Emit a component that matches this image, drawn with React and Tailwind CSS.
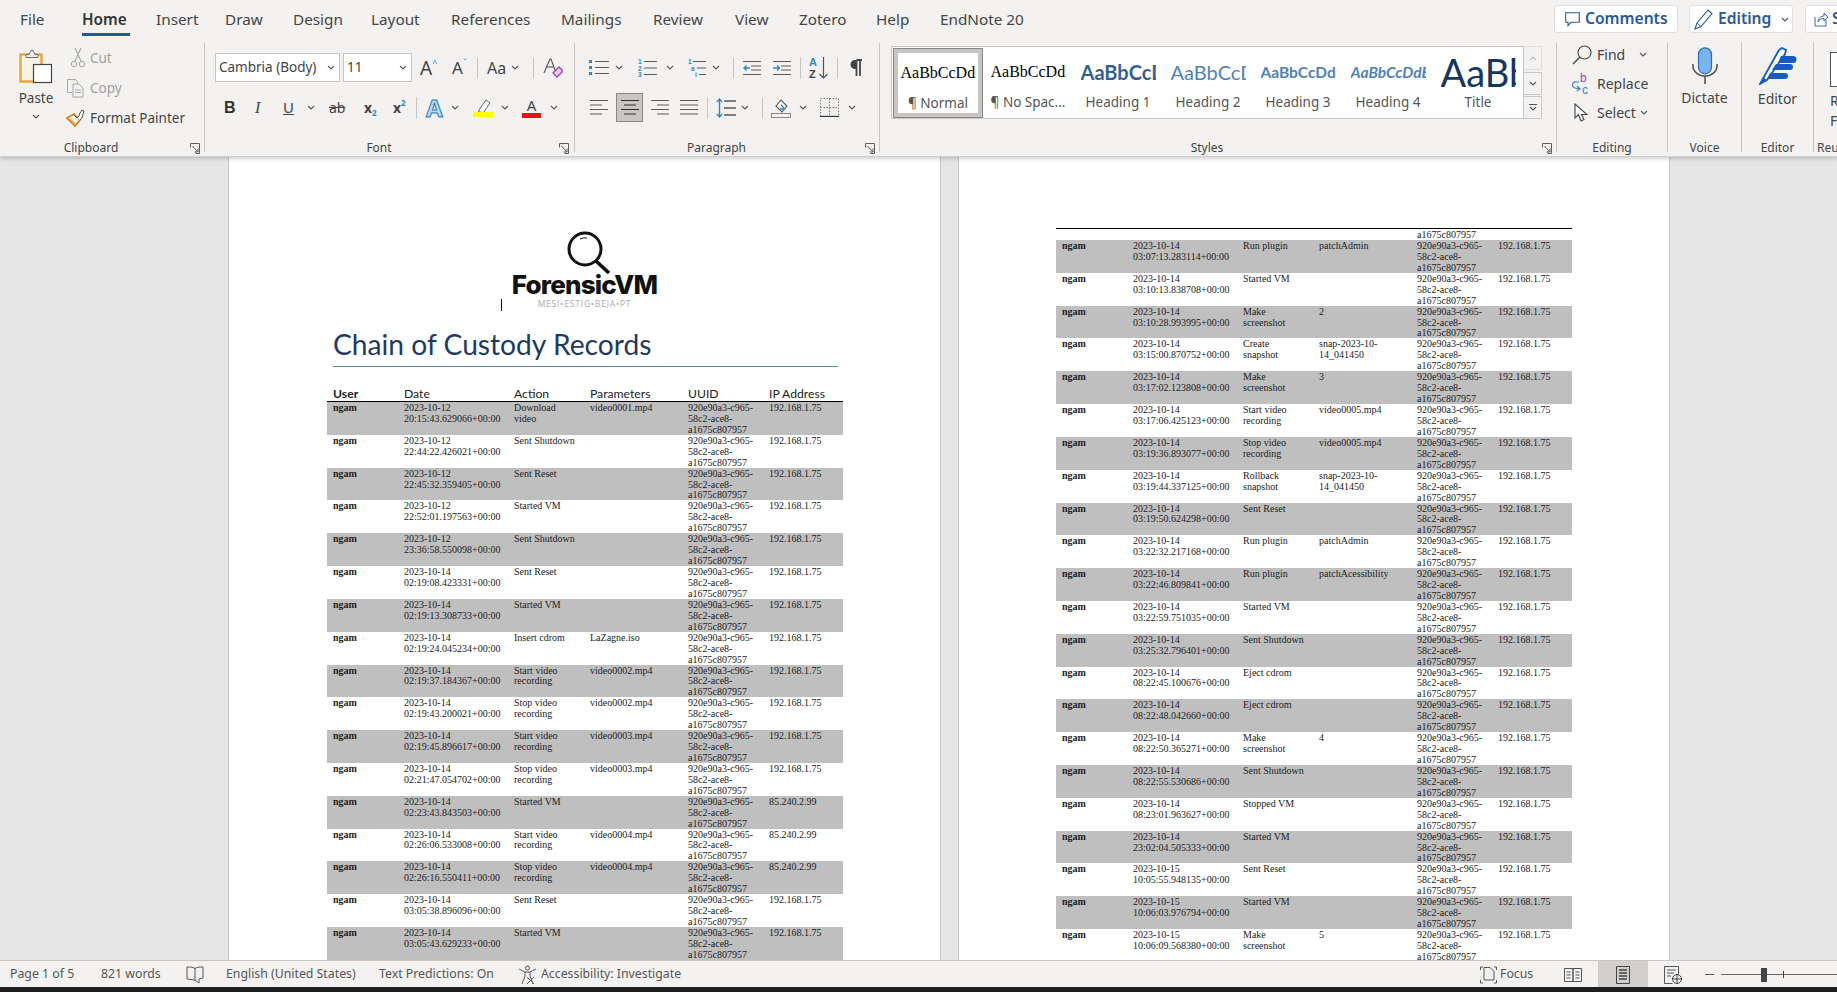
import React from "react";

const S = ({ w, h, children }) => (
  <svg width={w} height={h} viewBox={`0 0 ${w} ${h}`} fill="none" className="block shrink-0">{children}</svg>
);
const Chev = ({ c = "#555" }) => (
  <S w={8} h={5}><path d="M1 1l3 3 3-3" stroke={c} strokeWidth="1.1" /></S>
);
const Launcher = () => (
  <S w={10} h={11}><path d="M.5 .5h9v10M.5 .5v4M9.5 10.5h-4M2.5 3l5.5 6M8 5.5V9H4.5" stroke="#605e5c" strokeWidth="1" /></S>
);
const Sep = ({ h = "h-[22px]" }) => <div className={`w-px bg-[#c8c6c4] shrink-0 ${h}`} />;
const L = ({ d, w = 18, h = 16, c = "#5c5a58" }) => (
  <S w={w} h={h}><path d={d} stroke={c} strokeWidth="1.2" /></S>
);

const PasteIcon = () => (
  <S w={34} h={36}>
    <rect x="1.5" y="6.5" width="21" height="27" fill="#fbf3e6" stroke="#e8a33d" strokeWidth="2.4" />
    <path d="M7 6.5h3l2-4h2l2 4h3v3H7z" fill="#f3f2f1" stroke="#6b6b6b" strokeWidth="1" />
    <rect x="14.5" y="16.5" width="18" height="18" fill="#fff" stroke="#444" strokeWidth="1.2" />
  </S>
);
const CutIcon = () => (
  <S w={20} h={22}>
    <path d="M7 1l6 13M13 1L7 14" stroke="#a6a6a6" strokeWidth="1.1" />
    <circle cx="6" cy="17" r="2.7" stroke="#a6a6a6" /><circle cx="14" cy="17" r="2.7" stroke="#a6a6a6" />
  </S>
);
const CopyIcon = () => (
  <S w={20} h={20}>
    <path d="M1.5 1.5h8l2 2v2M1.5 1.5v13h5" stroke="#a6a6a6" />
    <path d="M7 6h6l4 4v9H7z" fill="#f3f2f1" stroke="#a6a6a6" />
    <path d="M9 12h6M9 14.5h6" stroke="#a6a6a6" />
  </S>
);
const PainterIcon = () => (
  <S w={20} h={18}>
    <path d="M1 9l7-4 6 6-5 6z" fill="#fdf3e4" stroke="#d47b1f" strokeWidth="1.6" />
    <path d="M8 6l3 3 2-2 1-3 2-3 2 1-1 3-1 4-2 2" fill="#fff" stroke="#555" strokeWidth="1" />
    <path d="M4 10l5 5" stroke="#e8a33d" strokeWidth="1.4" />
  </S>
);
const ClearIcon = () => (
  <S w={20} h={22}>
    <path d="M1 16L7 2h1l5 14" stroke="#555" strokeWidth="1.1" /><path d="M3.5 10h7" stroke="#555" strokeWidth="1.1" />
    <path d="M10 16l6-6 4 4-6 6z" fill="#e9c8ec" stroke="#a645ad" strokeWidth="1.3" />
  </S>
);
const Bullets = () => (
  <S w={20} h={18}>
    <rect x="0" y="1" width="3" height="3" fill="#2f88c7" /><rect x="0" y="7" width="3" height="3" fill="#2f88c7" /><rect x="0" y="13" width="3" height="3" fill="#2f88c7" />
    <path d="M6 2.5h14M6 8.5h14M6 14.5h14" stroke="#5c5a58" strokeWidth="1.2" />
  </S>
);
const Num = () => (
  <S w={19} h={20}>
    <text x="0" y="6" fontSize="6.5" fontWeight="700" fill="#2f88c7" fontFamily="Liberation Sans">1</text>
    <text x="0" y="12.5" fontSize="6.5" fontWeight="700" fill="#2f88c7" fontFamily="Liberation Sans">2</text>
    <text x="0" y="19" fontSize="6.5" fontWeight="700" fill="#2f88c7" fontFamily="Liberation Sans">3</text>
    <path d="M6 3.5h13M6 10h13M6 16.5h13" stroke="#5c5a58" strokeWidth="1.2" />
  </S>
);
const Multi = () => (
  <S w={18} h={20}>
    <text x="0" y="6" fontSize="6.5" fontWeight="700" fill="#2f88c7" fontFamily="Liberation Sans">1</text>
    <text x="3" y="12.5" fontSize="6.5" fontWeight="700" fill="#2f88c7" fontFamily="Liberation Sans">a</text>
    <text x="7" y="19" fontSize="6.5" fontWeight="700" fill="#2f88c7" fontFamily="Liberation Sans">i</text>
    <path d="M5 3.5h13M9 10h9M11 16.5h7" stroke="#5c5a58" strokeWidth="1.2" />
  </S>
);
const Indent = ({ inc }) => (
  <S w={18} h={16}>
    <path d="M0 1.5h18M8 6h10M8 10h10M0 14.5h18" stroke="#5c5a58" strokeWidth="1.2" />
    <path d={inc ? "M0 8h6M4 5.5L6.5 8 4 10.5" : "M7 8H1M3.5 5.5L1 8l2.5 2.5"} stroke="#2f88c7" strokeWidth="1.3" />
  </S>
);
const Sort = () => (
  <S w={20} h={24}>
    <text x="0" y="10" fontSize="11" fontWeight="700" fill="#2f88c7" fontFamily="Liberation Sans">A</text>
    <text x="0" y="22" fontSize="11" fontWeight="700" fill="#444" fontFamily="Liberation Sans">Z</text>
    <path d="M14.5 1v21M10.5 18l4 4 4-4" stroke="#555" strokeWidth="1.2" />
  </S>
);
const Pilcrow = () => (
  <S w={14} h={18}>
    <path d="M9 1H6a4.5 4.5 0 000 9h1.5V1z" fill="#444" />
    <path d="M7.5 1v16M11 1v16M7.5 1H13" stroke="#444" strokeWidth="1.8" />
  </S>
);
const Align = ({ t }) => {
  const d = {
    l: "M0 1.5h18M0 6h12M0 10.5h18M0 15h12",
    c: "M0 1.5h18M3 6h12M0 10.5h18M3 15h12",
    r: "M0 1.5h18M6 6h12M0 10.5h18M6 15h12",
    j: "M0 1.5h18M0 6h18M0 10.5h18M0 15h18",
  }[t];
  return <L d={d} h={17} c={t === "c" ? "#323130" : "#5c5a58"} />;
};
const LineSp = () => (
  <S w={20} h={20}>
    <path d="M8 3h12M8 10h12M8 17h12" stroke="#5c5a58" strokeWidth="1.3" />
    <path d="M3.5 1v18M1 4l2.5-3L6 4M1 16l2.5 3L6 16" stroke="#2f88c7" strokeWidth="1.4" />
  </S>
);
const Shade = () => (
  <S w={20} h={20}>
    <path d="M5 8l5-6 6 6-5 6z" stroke="#555" strokeWidth="1.1" />
    <path d="M9 11l4 0M10 7l3 3" stroke="#2f88c7" strokeWidth="1.4" />
    <rect x=".5" y="15.5" width="19" height="4" fill="#f3f2f1" stroke="#8a8886" />
  </S>
);
const Borders = () => (
  <S w={19} h={19}>
    <path d="M.5 .5h18v18h-18zM9.5 .5v18M.5 9.5h18" stroke="#777" strokeDasharray="1.5 1.5" />
    <path d="M0 18.5h19" stroke="#333" strokeWidth="1.3" />
  </S>
);
const SearchI = () => (
  <S w={20} h={20}>
    <circle cx="12.5" cy="7.5" r="6.5" stroke="#444" strokeWidth="1.1" />
    <path d="M8 12L1 19" stroke="#444" strokeWidth="1.4" />
  </S>
);
const ReplaceI = () => (
  <S w={19} h={22}>
    <text x="8" y="9" fontSize="12" fill="#a645ad" fontFamily="Liberation Sans">b</text>
    <text x="10" y="21" fontSize="12" fill="#2f88c7" fontFamily="Liberation Sans">c</text>
    <path d="M7 9H4a3 3 0 00-1 6l5 1M5 13l3 3-3 2" stroke="#2f88c7" strokeWidth="1.2" />
  </S>
);
const SelectI = () => (
  <S w={14} h={20}>
    <path d="M1 1v14l3.5-3.5L7 18l3-1.5-2.5-5H13z" fill="#fff" stroke="#444" strokeWidth="1.1" />
  </S>
);
const Mic = () => (
  <S w={26} h={37}>
    <rect x="6.5" y=".8" width="13" height="26" rx="6.5" fill="#79b4ee" stroke="#2f6db3" strokeWidth="1.2" />
    <path d="M1 17v2a12 10 0 0024 0v-2M13 29v8" stroke="#555" strokeWidth="1.6" />
  </S>
);
const EditorI = () => (
  <S w={38} h={38}>
    <path d="M1 37L20 3l3-2 4 2-1 4L8 33z" fill="#fff" stroke="#185abd" strokeWidth="1.8" />
    <path d="M22 9h12a3 3 0 010 7H19zM17 17h14a3 3 0 010 6H13zM11 26h15a3 3 0 010 6H8z" fill="#185abd" />
    <path d="M1 37l7-4-4-3z" fill="#185abd" />
  </S>
);
const CommentI = () => (
  <S w={15} h={15}><path d="M.7 .7h13.6v9.6H6L3 13.5v-3.2H.7z" stroke="#2b579a" strokeWidth="1.1" /></S>
);
const PencilI = () => (
  <S w={20} h={22}><path d="M1 21l2-6L14 2l4 3.5L7 18.5z" fill="#fff" stroke="#2b579a" strokeWidth="1.1" /><path d="M3 15l4 3.5" stroke="#2b579a" /></S>
);
const ShareI = () => (
  <S w={14} h={15}><path d="M1 5v9h11V8M4 10c0-4 3-6 6-6V1l4 4-4 4V6.5c-3 0-5 1-6 3.5" stroke="#2b579a" strokeWidth=".9" /></S>
);

const ribbonFont = { fontFamily: '"Noto Sans", sans-serif' };

const TABS = [
  ["File", "w-[62px]"],
  ["Insert", "w-[69px]"],
  ["Draw", "w-[68px]"],
  ["Design", "w-[78px]"],
  ["Layout", "w-[80px]"],
  ["References", "w-[110px]"],
  ["Mailings", "w-[92px]"],
  ["Review", "w-[82px]"],
  ["View", "w-[64px]"],
  ["Zotero", "w-[77px]"],
  ["Help", "w-[64px]"],
  ["EndNote 20", "w-[100px]"],
];

function TopBar() {
  return (
    <div className="h-[43px] flex justify-between">
      <div className="flex pl-[20px] text-[15.3px] text-[#444]">
        {TABS.slice(0, 1).map(([t, w]) => <div key={t} className={`${w} h-[38px] leading-[38px]`}>{t}</div>)}
        <div className="w-[48px] mr-[26px] h-[36px] leading-[38px] border-b-[3px] border-[#2b579a] font-semibold text-[#333] whitespace-nowrap">Home</div>
        {TABS.slice(1).map(([t, w]) => <div key={t} className={`${w} h-[38px] leading-[38px] whitespace-nowrap`}>{t}</div>)}
      </div>
      <div className="flex pt-[5px] text-[#2b579a] font-semibold text-[15.6px]">
        <div className="w-[124px] h-[28px] flex items-center pl-[10px] gap-[5px] bg-white border border-[#e1dfdd] rounded-[3px]"><CommentI />Comments</div>
        <div className="w-[104px] h-[28px] ml-[11px] flex items-center pl-[4px] gap-[4px] bg-white border border-[#e1dfdd] rounded-[3px]"><PencilI />Editing<span className="ml-[6px]"><Chev c="#2b579a" /></span></div>
        <div className="w-[60px] h-[28px] ml-[12px] -mr-[28px] flex items-center pl-[8px] gap-[4px] bg-white border border-[#e1dfdd] rounded-[3px]"><ShareI />Share</div>
      </div>
    </div>
  );
}

const Group = ({ w, label, labelW, launchMl, content }) => (
  <div className={`${w} h-[109px] shrink-0 flex flex-col border-r border-[#c8c6c4]`}>
    <div className="h-[99px]">{content}</div>
    <div className="h-[10px] pt-[2px] flex items-center text-[12px] text-[#444]">
      <div className={`${labelW} text-center`}>{label}</div>
      {launchMl && <div className={launchMl}><Launcher /></div>}
    </div>
  </div>
);

function Clipboard() {
  return (
    <div className="flex">
      <div className="w-[66px] pl-[6px] pt-[5px] flex flex-col items-center text-[13.5px] text-[#444]">
        <PasteIcon />
        <div className="leading-[20px] mt-[4px]">Paste</div>
        <div className="mt-[6px]"><Chev /></div>
      </div>
      <div className="text-[13.5px] text-[#444]">
        <div className="h-[30px] flex items-center text-[#a19f9d]"><span className="w-[20px] ml-[2px] mr-[2px]"><CutIcon /></span>Cut</div>
        <div className="h-[30px] flex items-center text-[#a19f9d]"><span className="w-[20px] mr-[4px]"><CopyIcon /></span>Copy</div>
        <div className="h-[30px] flex items-center whitespace-nowrap"><span className="w-[20px] mr-[4px]"><PainterIcon /></span>Format Painter</div>
      </div>
    </div>
  );
}

function Font() {
  return (
    <div className="pt-[10px] text-[#444]">
      <div className="h-[29px] flex items-center">
        <div className="ml-[10px] w-[125px] h-[29px] flex items-center justify-between pl-[3px] pr-[4px] bg-white border border-[#c8c6c4] text-[13.5px]">Cambria (Body)<Chev /></div>
        <div className="ml-[3px] w-[69px] h-[29px] flex items-center justify-between pl-[3px] pr-[4px] bg-white border border-[#c8c6c4] text-[13.5px]">11<Chev /></div>
        <div className="ml-[8px] w-[19px] text-[19px] leading-[20px] flex"><span>A</span><span className="text-[#2f88c7] text-[9px] leading-[10px]">^</span></div>
        <div className="ml-[13px] w-[17px] text-[17px] leading-[20px] flex"><span>A</span><span className="text-[#2f88c7] text-[9px] leading-[10px]">ˇ</span></div>
        <div className="ml-[8px]"><Sep /></div>
        <div className="ml-[9px] w-[20px] text-[16px]">Aa</div>
        <div className="ml-[4px] w-[8px]"><Chev /></div>
        <div className="ml-[14px]"><Sep /></div>
        <div className="ml-[9px] w-[20px]"><ClearIcon /></div>
      </div>
      <div className="h-[29px] mt-[11px] flex items-center">
        <div className="ml-[19px] w-[10px] font-bold text-[16px] text-[#333]" style={{ fontFamily: "Liberation Sans" }}>B</div>
        <div className="ml-[21px] w-[8px] italic text-[16px]" style={{ fontFamily: "Liberation Serif" }}>I</div>
        <div className="ml-[20px] w-[11px] underline text-[15px]">U</div>
        <div className="ml-[13px] w-[8px]"><Chev /></div>
        <div className="ml-[14px] w-[19px] line-through text-[14px]">ab</div>
        <div className="ml-[16px] w-[13px] font-bold text-[14px] flex items-end"><span>x</span><span className="text-[#2f88c7] text-[8px] leading-[10px]">2</span></div>
        <div className="ml-[16px] w-[14px] font-bold text-[14px] flex"><span>x</span><span className="text-[#2f88c7] text-[8px] leading-[12px]">2</span></div>
        <div className="ml-[9px]"><Sep /></div>
        <div className="ml-[9px] w-[19px] text-[24px] leading-[24px] font-bold text-[#bcdcf5]" style={{ WebkitTextStroke: "1px #2b79c2" }}>A</div>
        <div className="ml-[6px] w-[8px]"><Chev /></div>
        <div className="ml-[14px] w-[20px]">
          <S w={20} h={21}><path d="M6 13L13 3l4 3-7 10-5 1z" fill="#fff" stroke="#666" /><path d="M5 13l5 3-5 1z" fill="#888" /><rect x="0" y="15" width="20" height="5" fill="#ffff00" /></S>
        </div>
        <div className="ml-[8px] w-[8px]"><Chev /></div>
        <div className="ml-[13px] w-[19px] flex flex-col items-center">
          <div className="text-[15px] leading-[16px]">A</div>
          <div className="w-[19px] h-[5px] bg-[#e8101a]" />
        </div>
        <div className="ml-[9px] w-[8px]"><Chev /></div>
      </div>
    </div>
  );
}

function Paragraph() {
  return (
    <div className="pt-[10px]">
      <div className="h-[29px] flex items-center">
        <div className="ml-[14px] w-[20px]"><Bullets /></div>
        <div className="ml-[6px] w-[8px]"><Chev /></div>
        <div className="ml-[15px] w-[19px]"><Num /></div>
        <div className="ml-[9px] w-[8px]"><Chev /></div>
        <div className="ml-[14px] w-[18px]"><Multi /></div>
        <div className="ml-[6px] w-[8px]"><Chev /></div>
        <div className="ml-[13px]"><Sep /></div>
        <div className="ml-[9px] w-[18px]"><Indent /></div>
        <div className="ml-[12px] w-[18px]"><Indent inc /></div>
        <div className="ml-[9px]"><Sep /></div>
        <div className="ml-[8px] w-[20px]"><Sort /></div>
        <div className="ml-[8px]"><Sep /></div>
        <div className="ml-[11px] w-[14px]"><Pilcrow /></div>
      </div>
      <div className="h-[29px] mt-[11px] flex items-center">
        <div className="ml-[15px] w-[18px]"><Align t="l" /></div>
        <div className="ml-[8px] w-[27px] h-[29px] flex items-center justify-center bg-[#c8c6c4] border border-[#8a8886]"><Align t="c" /></div>
        <div className="ml-[8px] w-[17px]"><Align t="r" /></div>
        <div className="ml-[12px] w-[18px]"><Align t="j" /></div>
        <div className="ml-[9px]"><Sep /></div>
        <div className="ml-[8px] w-[20px]"><LineSp /></div>
        <div className="ml-[5px] w-[8px]"><Chev /></div>
        <div className="ml-[13px]"><Sep /></div>
        <div className="ml-[8px] w-[20px]"><Shade /></div>
        <div className="ml-[8px] w-[8px]"><Chev /></div>
        <div className="ml-[13px] w-[19px]"><Borders /></div>
        <div className="ml-[9px] w-[8px]"><Chev /></div>
      </div>
    </div>
  );
}

const STYLES = [
  { label: "¶ Normal", s: "text-[16px] text-black", f: "Liberation Serif", t: "AaBbCcDdEe", sel: true },
  { label: "¶ No Spac...", s: "text-[16px] text-black", f: "Liberation Serif", t: "AaBbCcDdEe" },
  { label: "Heading 1", s: "text-[20px] font-bold text-[#365f91]", f: "Lato", t: "AaBbCcDdEe" },
  { label: "Heading 2", s: "text-[20px] text-[#4f81bd]", f: "Lato", t: "AaBbCcDdEe" },
  { label: "Heading 3", s: "text-[15.5px] font-bold text-[#4f81bd]", f: "Lato", t: "AaBbCcDdEe" },
  { label: "Heading 4", s: "text-[15.5px] font-bold italic text-[#4f81bd]", f: "Lato", t: "AaBbCcDdEe" },
  { label: "Title", s: "text-[38px] text-[#17365d]", f: "Lato", t: "AaBbC" },
];

function Styles() {
  return (
    <div className="flex pl-[11px] pt-[3px]">
      <div className="w-[633px] h-[73px] bg-white border border-[#c8c6c4] flex pl-[1px] pt-px">
        {STYLES.map((x) => (
          <div key={x.label} className={`w-[90px] h-[70px] shrink-0 flex flex-col items-center ${x.sel ? "border border-[#8a8886] shadow-[inset_0_0_0_4px_#c8c6c4]" : ""}`}>
            <div className={`w-[75px] h-[45px] mt-[1px] overflow-hidden whitespace-nowrap leading-[46px] ${x.s}`} style={{ fontFamily: x.f }}>{x.t}</div>
            <div className="text-[13.5px] leading-[16px] text-[#555]">{x.label}</div>
          </div>
        ))}
      </div>
      <div className="w-[18px] h-[73px] flex flex-col justify-between">
        <div className="h-[24px] border border-l-0 border-[#e1dfdd] flex items-center justify-center"><span className="rotate-180"><Chev c="#bbb" /></span></div>
        <div className="h-[23px] border border-l-0 border-[#c8c6c4] flex items-center justify-center"><Chev /></div>
        <div className="h-[23px] border border-l-0 border-[#c8c6c4] flex flex-col items-center justify-center gap-[1px]"><div className="w-[8px] h-px bg-[#555]" /><Chev /></div>
      </div>
    </div>
  );
}

function Editing() {
  return (
    <div className="-mt-[3px] text-[14px] text-[#444]">
      <div className="h-[29px] flex items-center pl-[15px]"><span className="w-[20px] mr-[5px]"><SearchI /></span>Find<span className="ml-[14px]"><Chev /></span></div>
      <div className="h-[29px] flex items-center pl-[15px]"><span className="w-[20px] mr-[5px]"><ReplaceI /></span>Replace</div>
      <div className="h-[29px] flex items-center pl-[15px]"><span className="w-[20px] mr-[5px] pl-[2px]"><SelectI /></span>Select<span className="ml-[4px]"><Chev /></span></div>
    </div>
  );
}

const Tall = ({ icon, text }) => (
  <div className="pt-[4px] flex flex-col items-center text-[14px] text-[#444]">
    {icon}
    <div className="leading-[20px] mt-[4px]">{text}</div>
  </div>
);

function Ribbon() {
  return (
    <div className="h-[157px] shrink-0 bg-[#f3f2f1] border-b border-[#d2d0ce] shadow-[0_2px_4px_rgba(0,0,0,0.18)] relative z-10 overflow-hidden" style={ribbonFont}>
      <TopBar />
      <div className="flex">
        <Group w="w-[205px]" label="Clipboard" labelW="w-[182px]" launchMl="ml-[8px]" content={<Clipboard />} />
        <Group w="w-[370px]" label="Font" labelW="w-[348px]" launchMl="ml-[6px]" content={<Font />} />
        <Group w="w-[305px]" label="Paragraph" labelW="w-[283px]" launchMl="ml-[7px]" content={<Paragraph />} />
        <Group w="w-[677px]" label="Styles" labelW="w-[654px]" launchMl="ml-[8px]" content={<Styles />} />
        <Group w="w-[111px]" label="Editing" labelW="w-[110px]" content={<Editing />} />
        <Group w="w-[74px]" label="Voice" labelW="w-[73px]" content={<Tall icon={<Mic />} text="Dictate" />} />
        <Group w="w-[72px]" label="Editor" labelW="w-[71px]" content={<Tall icon={<EditorI />} text="Editor" />} />
        <div className="w-[30px] h-[109px] flex flex-col shrink-0 overflow-hidden">
          <div className="h-[99px] pl-[16px] pt-[9px] text-[14px] leading-[20px] text-[#444]">
            <div className="w-[12px] h-[35px] border border-[#555] bg-white" />
            <div className="mt-[4px]">R</div>
            <div>F</div>
          </div>
          <div className="h-[10px] pt-[2px] flex items-center pl-[3px] text-[12px] text-[#444] whitespace-nowrap">Reuse</div>
        </div>
      </div>
    </div>
  );
}

const UUID = "920e90a3-c965-\n58c2-ace8-\na1675c807957";
const IP = "192.168.1.75";
const IP2 = "85.240.2.99";
const V = "2023-10-";

const PAGE1 = [
  ["12\n20:15:43.629066", "Download\nvideo", "video0001.mp4", IP],
  ["12\n22:44:22.426021", "Sent Shutdown", "", IP],
  ["12\n22:45:32.359405", "Sent Reset", "", IP],
  ["12\n22:52:01.197563", "Started VM", "", IP],
  ["12\n23:36:58.550098", "Sent Shutdown", "", IP],
  ["14\n02:19:08.423331", "Sent Reset", "", IP],
  ["14\n02:19:13.308733", "Started VM", "", IP],
  ["14\n02:19:24.045234", "Insert cdrom", "LaZagne.iso", IP],
  ["14\n02:19:37.184367", "Start video\nrecording", "video0002.mp4", IP],
  ["14\n02:19:43.200021", "Stop video\nrecording", "video0002.mp4", IP],
  ["14\n02:19:45.896617", "Start video\nrecording", "video0003.mp4", IP],
  ["14\n02:21:47.054702", "Stop video\nrecording", "video0003.mp4", IP],
  ["14\n02:23:43.843503", "Started VM", "", IP2],
  ["14\n02:26:06.533008", "Start video\nrecording", "video0004.mp4", IP2],
  ["14\n02:26:16.550411", "Stop video\nrecording", "video0004.mp4", IP2],
  ["14\n03:05:38.896096", "Sent Reset", "", IP],
  ["14\n03:05:43.629233", "Started VM", "", IP],
];

const PAGE2 = [
  ["14\n03:07:13.283114", "Run plugin", "patchAdmin", IP],
  ["14\n03:10:13.838708", "Started VM", "", IP],
  ["14\n03:10:28.993995", "Make\nscreenshot", "2", IP],
  ["14\n03:15:00.870752", "Create\nsnapshot", "snap-2023-10-\n14_041450", IP],
  ["14\n03:17:02.123808", "Make\nscreenshot", "3", IP],
  ["14\n03:17:06.425123", "Start video\nrecording", "video0005.mp4", IP],
  ["14\n03:19:36.893077", "Stop video\nrecording", "video0005.mp4", IP],
  ["14\n03:19:44.337125", "Rollback\nsnapshot", "snap-2023-10-\n14_041450", IP],
  ["14\n03:19:50.624298", "Sent Reset", "", IP],
  ["14\n03:22:32.217168", "Run plugin", "patchAdmin", IP],
  ["14\n03:22:46.809841", "Run plugin", "patchAcessibility", IP],
  ["14\n03:22:59.751035", "Started VM", "", IP],
  ["14\n03:25:32.796401", "Sent Shutdown", "", IP],
  ["14\n08:22:45.100676", "Eject cdrom", "", IP],
  ["14\n08:22:48.042660", "Eject cdrom", "", IP],
  ["14\n08:22:50.365271", "Make\nscreenshot", "4", IP],
  ["14\n08:22:55.530686", "Sent Shutdown", "", IP],
  ["14\n08:23:01.963627", "Stopped VM", "", IP],
  ["14\n23:02:04.505333", "Started VM", "", IP],
  ["15\n10:05:55.948135", "Sent Reset", "", IP],
  ["15\n10:06:03.976794", "Started VM", "", IP],
  ["15\n10:06:09.568380", "Make\nscreenshot", "5", IP],
];

const GRID = "grid grid-cols-[77px_110px_76px_98px_81px_74px]";

const Row = ({ d, shaded }) => (
  <div className={`${GRID} h-[32.82px] pt-px overflow-hidden whitespace-pre-line text-[10px] leading-[10.9px] text-[#222] ${shaded ? "bg-[#bfbfbf]" : ""}`}>
    <div className="pl-[6px] font-bold">ngam</div>
    <div>{`${V}${d[0]}+00:00`}</div>
    <div>{d[1]}</div>
    <div>{d[2]}</div>
    <div>{UUID}</div>
    <div>{d[3]}</div>
  </div>
);

const TSerif = { fontFamily: '"Liberation Serif", serif' };

function Page1() {
  return (
    <div className="w-[713px] shrink-0 bg-white border-x border-[#c8c6c4] h-[900px] pt-[73px]">
      <div className="flex flex-col items-center relative">
        <S w={50} h={44}>
          <circle cx="25" cy="19" r="16" stroke="#111" strokeWidth="3" />
          <path d="M20 9a11 11 0 017-1" stroke="#111" strokeWidth="1" />
          <path d="M36 31l13 12" stroke="#111" strokeWidth="3.6" />
        </S>
        <div className="h-[22px] leading-[22px] text-[26px] font-extrabold tracking-[-0.8px] text-[#111]" style={{ fontFamily: '"Inter", sans-serif' }}>ForensicVM</div>
        <div className="mt-[4px] h-[8px] leading-[8px] text-[8.5px] tracking-[0.8px] text-[#aaa]" style={{ fontFamily: '"Open Sans", sans-serif' }}>MESI•ESTIG•BEJA•PT</div>
        <div className="absolute left-[272px] top-[69px] w-px h-[12px] bg-black" />
      </div>
      <div className="ml-[104px] w-[505px] mt-[19px] h-[40px] border-b border-[#5f82a8] text-[28.2px] leading-[34px] text-[#1f3a5f]" style={{ fontFamily: '"Lato", sans-serif' }}>
        Chain of Custody Records
      </div>
      <div className="ml-[98px] w-[516px] mt-[20px]">
        <div className={`${GRID} h-[15px] border-b border-black text-[12.2px] leading-[14px] text-[#222]`} style={{ fontFamily: '"Lato", sans-serif' }}>
          <div className="pl-[6px] font-bold">User</div>
          <div>Date</div>
          <div>Action</div>
          <div>Parameters</div>
          <div>UUID</div>
          <div>IP Address</div>
        </div>
        <div style={TSerif}>
          {PAGE1.map((d, i) => <Row key={i} d={d} shaded={i % 2 === 0} />)}
        </div>
      </div>
    </div>
  );
}

function Page2() {
  return (
    <div className="w-[712px] shrink-0 bg-white border-x border-[#c8c6c4] h-[900px] pt-[71px]">
      <div className="ml-[97px] w-[516px] border-t border-black" style={TSerif}>
        <div className={`${GRID} h-[11px] pt-px text-[10px] leading-[10.9px] text-[#222]`}>
          <div /><div /><div /><div /><div>a1675c807957</div><div />
        </div>
        {PAGE2.map((d, i) => <Row key={i} d={d} shaded={i % 2 === 0} />)}
      </div>
    </div>
  );
}

function Status() {
  return (
    <div className="h-[27px] pt-px shrink-0 bg-[#f3f2f1] border-t border-[#c8c6c4] flex items-center text-[12.3px] text-[#555] relative z-10 overflow-hidden" style={ribbonFont}>
      <div className="ml-[10px] w-[91px]">Page 1 of 5</div>
      <div className="w-[85px]">821 words</div>
      <div className="w-[40px]">
        <S w={18} h={18}><path d="M1 1c3 0 6 0 8 1.500 2-1.500 5-1.500 8-1.500v11l-4 1v4l-4-3-8-1zM9 2.500V14" stroke="#555" strokeWidth="1" /></S>
      </div>
      <div className="w-[153px] whitespace-nowrap">English (United States)</div>
      <div className="w-[139px] whitespace-nowrap">Text Predictions: On</div>
      <div className="w-[23px]">
        <S w={19} h={20}><circle cx="9.500" cy="3" r="2" stroke="#555" /><path d="M1 4l6 3h5l6-3M7 7v4l-3 8M12 7v4l3 8M9 12l7 7M16 12l-7 7" stroke="#555" strokeWidth="1" /></S>
      </div>
      <div className="whitespace-nowrap">Accessibility: Investigate</div>
      <div className="flex-1" />
      <div className="w-[20px]">
        <S w={17} h={18}><path d="M4 1.500h6l4 4V14H4z" stroke="#555" /><path d="M.5 4V1h2.500M.5 14v3h2.500M16.500 14v3H14M14 1h2.500v3" stroke="#555" /></S>
      </div>
      <div className="w-[64px]">Focus</div>
      <div className="w-[34px]">
        <S w={18} h={16}><path d="M.5 1.500h8.500v13H.5zM9 1.500h8.500v13H9z" stroke="#555" /><path d="M2.500 5h4M2.500 8h4M2.500 11h4M11.500 5h4M11.500 8h4M11.500 11h4" stroke="#555" /></S>
      </div>
      <div className="w-[50px] h-[27px] bg-[#d2d0ce] flex items-center justify-center">
        <S w={14} h={18}><path d="M.5 .5h13v17H.5z" stroke="#444" /><path d="M3 4h8M3 7h8M3 10h8M3 13h8" stroke="#444" strokeWidth="1.300" /></S>
      </div>
      <div className="w-[57px] pl-[16px]">
        <S w={18} h={18}><path d="M.5 .5h14v8M.5 .5v17h8M3 4h9M3 7h7M3 10h4" stroke="#555" /><circle cx="13" cy="13" r="4.500" fill="#f3f2f1" stroke="#444" /><path d="M8.500 13h9M13 8.500v9" stroke="#444" /></S>
      </div>
      <div className="w-[16px]"><div className="w-[9px] h-px bg-[#555]" /></div>
      <div className="w-[116px] h-[16px] shrink-0 flex items-center relative">
        <div className="w-full h-px bg-[#666]" />
        <div className="absolute left-[40px] top-[1px] w-[6px] h-[14px] bg-[#444]" />
        <div className="absolute left-[62px] top-[4px] w-px h-[7px] bg-[#444]" />
      </div>
    </div>
  );
}

export default function App() {
  return (
    <div className="w-[1837px] h-[992px] flex flex-col overflow-hidden bg-[#e6e6e6]">
      <Ribbon />
      <main className="flex-1 min-h-0 overflow-hidden flex pl-[228px] gap-[17px]">
        <Page1 />
        <Page2 />
      </main>
      <Status />
      <div className="h-[5px] shrink-0 bg-[#1e1e1e]" />
    </div>
  );
}
